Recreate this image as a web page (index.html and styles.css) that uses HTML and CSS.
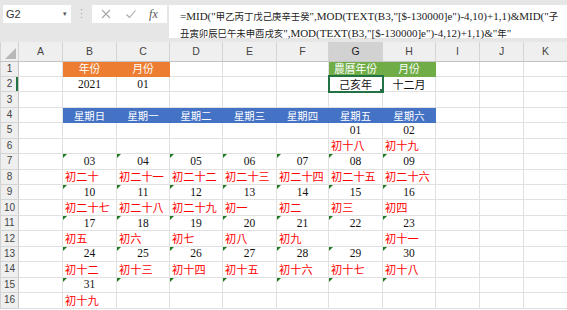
FILE: index.html
```html
<!DOCTYPE html>
<html lang="zh-Hant">
<head>
  <meta charset="UTF-8">
  <title>農曆月曆</title>
  <link rel="stylesheet" href="styles.css">
</head>
<body>
  <div class="toolbar">
    <div class="namebox"><span>G2</span><span class="drop">▾</span></div>
    <div class="grip">⋮</div>
    <div class="fxbtns">
      <svg width="12" height="12" viewBox="0 0 12 12"><path d="M2 2L10 10M10 2L2 10" stroke="#a6a6a6" stroke-width="1.1" fill="none"/></svg>
      <svg width="12" height="12" viewBox="0 0 12 12"><path d="M1.5 6.5L4.5 9.5L10.5 2.5" stroke="#a6a6a6" stroke-width="1.1" fill="none"/></svg>
      <span class="fx">fx</span>
    </div>
    <div class="formula">=MID("<span class="zh">甲乙丙丁戊己庚辛壬癸</span>",MOD(TEXT(B3,"[$-130000]e")-4,10)+1,1)&amp;MID("<span class="zh">子</span><br><span class="zh">丑寅卯辰巳午未申酉戌亥</span>",MOD(TEXT(B3,"[$-130000]e")-4,12)+1,1)&amp;"<span class="zh">年</span>"</div>
  </div>

  <table class="sheet">
    <colgroup>
      <col style="width:18px"><col style="width:44px">
      <col style="width:54px"><col style="width:53px"><col style="width:53px"><col style="width:54px">
      <col style="width:52px"><col style="width:54px"><col style="width:53px">
      <col style="width:44px"><col style="width:44px"><col style="width:44px">
    </colgroup>
    <tr class="colhead">
      <th class="corner"></th><th>A</th><th>B</th><th>C</th><th>D</th><th>E</th><th>F</th><th class="active">G</th><th>H</th><th>I</th><th>J</th><th>K</th>
    </tr>
    <tr>
      <th class="rh">1</th><td></td><td class="orange">年份</td><td class="orange">月份</td><td></td><td></td><td></td><td class="green">農曆年份</td><td class="green">月份</td><td></td><td></td><td></td>
    </tr>
    <tr>
      <th class="rh active">2</th><td></td><td class="num">2021</td><td class="num">01</td><td></td><td></td><td></td><td class="zhc sel">己亥年</td><td class="zhc">十二月</td><td></td><td></td><td></td>
    </tr>
    <tr>
      <th class="rh">3</th><td></td><td></td><td></td><td></td><td></td><td></td><td></td><td></td><td></td><td></td><td></td>
    </tr>
    <tr>
      <th class="rh">4</th><td></td><td class="week">星期日</td><td class="week">星期一</td><td class="week">星期二</td><td class="week">星期三</td><td class="week">星期四</td><td class="week">星期五</td><td class="week">星期六</td><td></td><td></td><td></td>
    </tr>
    <tr>
      <th class="rh">5</th><td></td><td></td><td></td><td></td><td></td><td></td><td class="num">01</td><td class="num">02</td><td></td><td></td><td></td>
    </tr>
    <tr>
      <th class="rh">6</th><td></td><td></td><td></td><td></td><td></td><td></td><td class="lunar">初十八</td><td class="lunar">初十九</td><td></td><td></td><td></td>
    </tr>
    <tr>
      <th class="rh">7</th><td></td><td class="num tri">03</td><td class="num tri">04</td><td class="num tri">05</td><td class="num tri">06</td><td class="num tri">07</td><td class="num tri">08</td><td class="num tri">09</td><td></td><td></td><td></td>
    </tr>
    <tr>
      <th class="rh">8</th><td></td><td class="lunar">初二十</td><td class="lunar">初二十一</td><td class="lunar">初二十二</td><td class="lunar">初二十三</td><td class="lunar">初二十四</td><td class="lunar">初二十五</td><td class="lunar">初二十六</td><td></td><td></td><td></td>
    </tr>
    <tr>
      <th class="rh">9</th><td></td><td class="num tri">10</td><td class="num tri">11</td><td class="num tri">12</td><td class="num tri">13</td><td class="num tri">14</td><td class="num tri">15</td><td class="num tri">16</td><td></td><td></td><td></td>
    </tr>
    <tr>
      <th class="rh">10</th><td></td><td class="lunar">初二十七</td><td class="lunar">初二十八</td><td class="lunar">初二十九</td><td class="lunar">初一</td><td class="lunar">初二</td><td class="lunar">初三</td><td class="lunar">初四</td><td></td><td></td><td></td>
    </tr>
    <tr>
      <th class="rh">11</th><td></td><td class="num tri">17</td><td class="num tri">18</td><td class="num tri">19</td><td class="num tri">20</td><td class="num tri">21</td><td class="num tri">22</td><td class="num tri">23</td><td></td><td></td><td></td>
    </tr>
    <tr>
      <th class="rh">12</th><td></td><td class="lunar">初五</td><td class="lunar">初六</td><td class="lunar">初七</td><td class="lunar">初八</td><td class="lunar">初九</td><td></td><td class="lunar">初十一</td><td></td><td></td><td></td>
    </tr>
    <tr>
      <th class="rh">13</th><td></td><td class="num tri">24</td><td class="num tri">25</td><td class="num tri">26</td><td class="num tri">27</td><td class="num tri">28</td><td class="num tri">29</td><td class="num tri">30</td><td></td><td></td><td></td>
    </tr>
    <tr>
      <th class="rh">14</th><td></td><td class="lunar">初十二</td><td class="lunar">初十三</td><td class="lunar">初十四</td><td class="lunar">初十五</td><td class="lunar">初十六</td><td class="lunar">初十七</td><td class="lunar">初十八</td><td></td><td></td><td></td>
    </tr>
    <tr>
      <th class="rh">15</th><td></td><td class="num tri">31</td><td class="tri"></td><td class="tri"></td><td class="tri"></td><td class="tri"></td><td class="tri"></td><td class="tri"></td><td></td><td></td><td></td>
    </tr>
    <tr>
      <th class="rh">16</th><td></td><td class="lunar">初十九</td><td></td><td></td><td></td><td></td><td></td><td></td><td></td><td></td><td></td>
    </tr>
  </table>
</body>
</html>
```

FILE: styles.css
```css
body {
  margin: 0;
  background-color: #fff;
  font-family: "Liberation Serif", "Noto Sans CJK TC", serif;
  overflow: hidden;
}

/* Formula bar */
.toolbar {
  height: 42px;
  background-color: #e6e6e6;
  display: flex;
  align-items: flex-start;
  padding: 5px 0 0 3px;
  box-sizing: border-box;
}

.namebox {
  width: 68px;
  height: 18px;
  background-color: #fff;
  display: flex;
  align-items: center;
  justify-content: space-between;
  padding: 0 4px 0 3px;
  box-sizing: border-box;
  font-family: "Liberation Sans", sans-serif;
  font-size: 11px;
  color: #333;
}

.drop {
  font-size: 7px;
  color: #555;
}

.grip {
  width: 21px;
  height: 18px;
  text-align: center;
  line-height: 18px;
  font-family: "DejaVu Sans", sans-serif;
  font-size: 11px;
  color: #b0b0b0;
}

.fxbtns {
  width: 75px;
  height: 18px;
  background-color: #fff;
  display: flex;
  align-items: center;
  justify-content: space-around;
  padding: 0 3px 0 2px;
  box-sizing: border-box;
}

.fx {
  font-family: "Liberation Serif", serif;
  font-style: italic;
  font-size: 12px;
  color: #555;
}

.formula {
  flex: 1;
  height: 33px;
  margin-left: 2px;
  background-color: #fff;
  padding: 3px 0 0 11px;
  box-sizing: border-box;
  font-size: 11px;
  line-height: 16.5px;
  color: #222;
  white-space: nowrap;
}

.formula .zh {
  font-family: "Noto Sans CJK TC", sans-serif;
  font-size: 9.4px;
}

/* Sheet grid */
.sheet {
  border-collapse: collapse;
  table-layout: fixed;
  width: 567px;
}

.sheet tr {
  height: 15.45px;
}

.sheet tr.colhead {
  height: 19px;
}

.sheet td {
  border: 1px solid #e1e1e1;
  padding: 0 2px;
  font-size: 11.5px;
  line-height: 13px;
  white-space: nowrap;
  overflow: hidden;
  vertical-align: middle;
  color: #111;
}

.sheet th {
  background-color: #efefef;
  border: 1px solid #d4d4d4;
  font-family: "Liberation Sans", sans-serif;
  font-weight: normal;
  font-size: 10px;
  color: #444;
  padding: 0;
  line-height: 12px;
}

.colhead th {
  border-top: none;
  border-bottom-color: #c4c4c4;
  font-size: 10.5px;
}

.colhead th.active {
  background-color: #d2d2d2;
  color: #222;
}

th.corner {
  position: relative;
}

th.corner::after {
  content: "";
  position: absolute;
  right: 2px;
  bottom: 2px;
  border-bottom: 11px solid #b7b7b7;
  border-left: 11px solid transparent;
}

th.rh {
  text-align: center;
  border-right-color: #c4c4c4;
}

th.rh.active {
  box-shadow: inset -2px 0 0 #217346;
}

.num {
  text-align: center;
}

.zhc {
  text-align: center;
  font-family: "Noto Sans CJK TC", sans-serif;
  font-size: 11px !important;
}

.lunar {
  color: #f00 !important;
  font-family: "Noto Sans CJK TC", sans-serif;
  font-size: 11.2px !important;
  text-align: left;
}

.orange,
.green,
.week {
  color: #fff !important;
  text-align: center;
  font-family: "Noto Sans CJK TC", sans-serif;
  font-size: 10.8px !important;
}

.orange {
  background-color: #ed7d31;
  border-color: #ed7d31 !important;
}

.green {
  background-color: #70ad47;
  border-color: #70ad47 !important;
}

.week {
  background-color: #4472c4;
  border-color: #4472c4 !important;
  font-size: 10.3px !important;
}

/* Error-check marker */
td.tri {
  position: relative;
}

td.tri::before {
  content: "";
  position: absolute;
  left: 0;
  top: 0;
  border-top: 4px solid #1e7b22;
  border-right: 4px solid transparent;
}

/* Active cell */
td.sel {
  position: relative;
  outline: 2px solid #217346;
  outline-offset: -1px;
}

td.sel::after {
  content: "";
  position: absolute;
  right: -3px;
  bottom: -3px;
  width: 4px;
  height: 4px;
  background-color: #217346;
  border: 1px solid #fff;
}
```
